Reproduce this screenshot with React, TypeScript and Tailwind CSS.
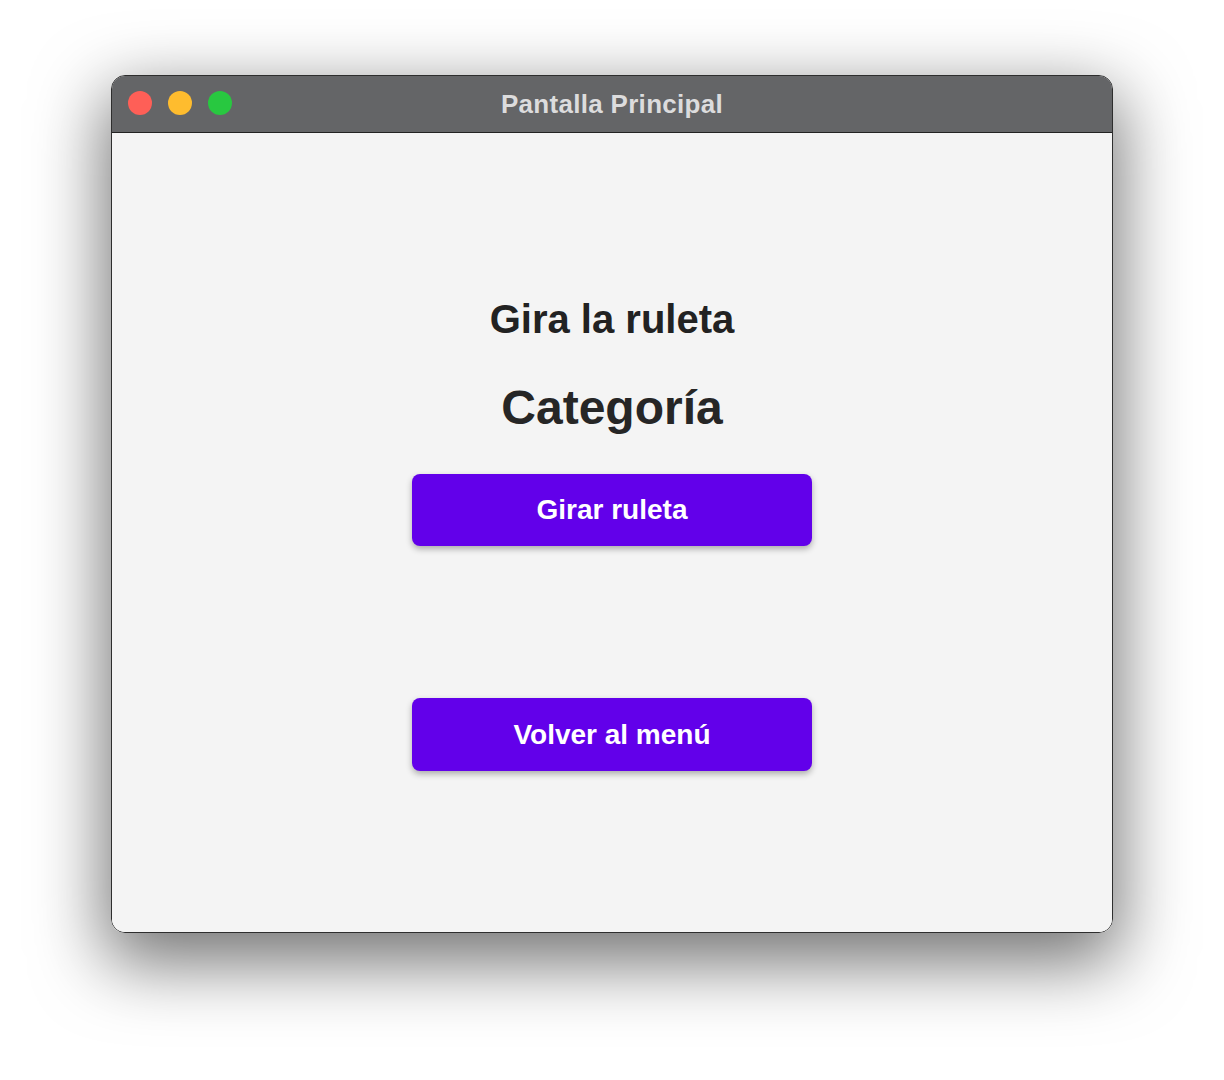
import React from 'react';

export default function App() {
  return (
    <div className="w-full h-[1080px] bg-white flex justify-center pt-[75px]" style={{ fontFamily: '"Liberation Sans", Arial, sans-serif' }}>
      <div className="w-[1002px] h-[858px] rounded-[14px] border border-[#2e2e2e] overflow-hidden flex flex-col shadow-[0_24px_70px_6px_rgba(0,0,0,0.55)]">
        {/* barra de titulo */}
        <div className="h-[57px] shrink-0 bg-[#646567] border-b border-[#222] relative flex items-center justify-center">
          <div className="absolute left-[16px] top-[15px] flex gap-[16px]">
            <span className="w-[24px] h-[24px] rounded-full bg-[#fe5f57]" />
            <span className="w-[24px] h-[24px] rounded-full bg-[#febc2e]" />
            <span className="w-[24px] h-[24px] rounded-full bg-[#28c840]" />
          </div>
          <span className="text-[26px] tracking-[0.3px] font-bold text-[#dcdcdd]">Pantalla Principal</span>
        </div>

        <div className="flex-1 bg-[#f4f4f4] flex flex-col items-center">
          <h2 className="mt-[166px] h-[40px] leading-[40px] text-[40px] font-bold text-[#222]">Gira la ruleta</h2>
          <h1 className="mt-[45px] h-[48px] leading-[48px] text-[48px] font-bold text-[#262626]">Categoría</h1>
          <button className="mt-[42px] w-[400px] h-[72px] rounded-[8px] bg-[#6200ea] text-white text-[28px] font-bold shadow-[0_3px_6px_rgba(0,0,0,0.3)]">
            Girar ruleta
          </button>
          <button className="mt-[152px] w-[400px] h-[73px] rounded-[8px] bg-[#6200ea] text-white text-[28px] font-bold shadow-[0_3px_6px_rgba(0,0,0,0.3)]">
            Volver al menú
          </button>
        </div>
      </div>
    </div>
  );
}
